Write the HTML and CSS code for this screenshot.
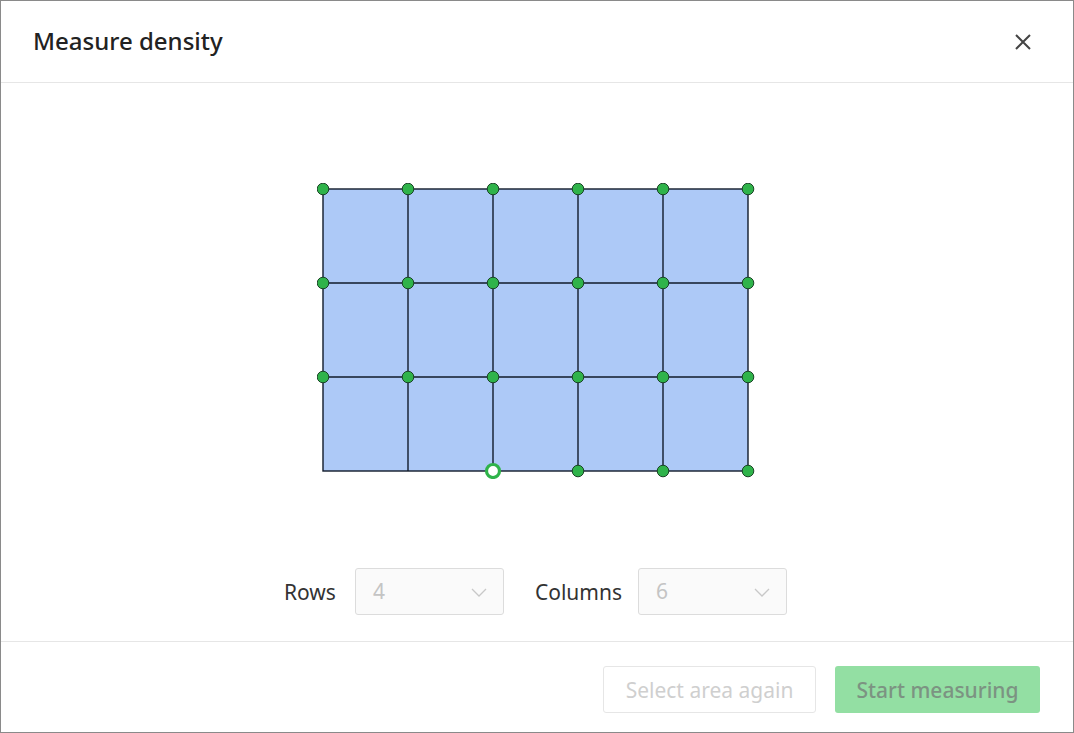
FILE: index.html
```html
<!DOCTYPE html>
<html>
<head>
    <title>Measure density</title>
    <link rel="stylesheet" href="styles.css">
</head>
<body>
    <div class="dialog">
        <div class="dialog-header">
            <h2>Measure density</h2>
            <button class="close-btn" aria-label="Close">
                <svg width="16" height="16" viewBox="0 0 16 16">
                    <path d="M1 1 L15 15 M15 1 L1 15" stroke="#444" stroke-width="2" fill="none"/>
                </svg>
            </button>
        </div>
        <div class="dialog-body">
            <svg class="grid" width="438" height="296" viewBox="0 0 438 296">
                <rect x="6" y="6" width="425" height="282" fill="#adc9f7"/>
                <g stroke="#101a2a" stroke-width="1.4" fill="none">
                    <rect x="6" y="6" width="425" height="282"/>
                    <line x1="91" y1="6" x2="91" y2="288"/>
                    <line x1="176" y1="6" x2="176" y2="288"/>
                    <line x1="261" y1="6" x2="261" y2="288"/>
                    <line x1="346" y1="6" x2="346" y2="288"/>
                    <line x1="6" y1="100" x2="431" y2="100"/>
                    <line x1="6" y1="194" x2="431" y2="194"/>
                </g>
                <g id="dots" fill="#2fb34a" stroke="#1a4426" stroke-width="1"></g>
                <circle cx="176" cy="288" r="6.5" fill="#fff" stroke="#2fb34a" stroke-width="3.2"/>
            </svg>
            <div class="controls">
                <label>Rows</label>
                <div class="select">
                    <span>4</span>
                    <svg width="16" height="10" viewBox="0 0 16 10"><path d="M1 1 L8 8 L15 1" stroke="#c8c8c8" stroke-width="1.3" fill="none"/></svg>
                </div>
                <label class="second">Columns</label>
                <div class="select">
                    <span>6</span>
                    <svg width="16" height="10" viewBox="0 0 16 10"><path d="M1 1 L8 8 L15 1" stroke="#c8c8c8" stroke-width="1.3" fill="none"/></svg>
                </div>
            </div>
        </div>
        <div class="dialog-footer">
            <button class="btn btn-outline" disabled>Select area again</button>
            <button class="btn btn-primary" disabled>Start measuring</button>
        </div>
    </div>

    <script>
        const dots = document.getElementById("dots");
        const xs = [6, 91, 176, 261, 346, 431];
        const ys = [6, 100, 194, 288];
        ys.forEach(function (y, r) {
            xs.forEach(function (x, c) {
                // bottom row: the first two corners are not placed yet, the third is the active one
                if (r === 3 && c < 3) return;
                const dot = document.createElementNS("http://www.w3.org/2000/svg", "circle");
                dot.setAttribute("cx", x);
                dot.setAttribute("cy", y);
                dot.setAttribute("r", 5.8);
                dots.appendChild(dot);
            });
        });
    </script>
</body>
</html>
```

FILE: styles.css
```css
body {
    margin: 0;
    font-family: "Noto Sans", "Open Sans", sans-serif;
}
.dialog {
    width: 1074px;
    height: 733px;
    box-sizing: border-box;
    border: 1px solid #8a8a8a;
    background: #fff;
    display: flex;
    flex-direction: column;
}
.dialog-header {
    height: 81px;
    border-bottom: 1px solid #e6e6e6;
    display: flex;
    align-items: center;
    justify-content: space-between;
    padding: 0 42px 0 32px;
}
.dialog-header h2 {
    margin: 0;
    font-size: 24px;
    font-weight: 500;
    color: #222;
    padding-bottom: 3px;
}
.close-btn {
    background: none;
    border: none;
    padding: 0;
    width: 16px;
    height: 16px;
    cursor: pointer;
    display: flex;
}
.dialog-body {
    flex: 1;
    border-bottom: 1px solid #e6e6e6;
    display: flex;
    flex-direction: column;
    align-items: center;
    padding-top: 100px;
    box-sizing: border-box;
}
.grid {
    display: block;
    margin-left: -2px;
}
.controls {
    margin-top: 89px;
    margin-left: -3px;
    display: flex;
    align-items: center;
}
.controls label {
    font-size: 21px;
    color: #333;
    margin-right: 19px;
}
.controls label.second {
    margin-left: 31px;
    margin-right: 16px;
}
.select {
    width: 149px;
    height: 47px;
    box-sizing: border-box;
    border: 1px solid #dcdcdc;
    border-radius: 3px;
    background: #fafafa;
    display: flex;
    align-items: center;
    justify-content: space-between;
    padding: 0 16px 0 17px;
    font-size: 21px;
    color: #c4c4c4;
}
.select span {
    margin-top: -2px;
}
.select svg {
    margin-top: 2px;
}
.dialog-footer {
    height: 90px;
    display: flex;
    align-items: flex-start;
    justify-content: flex-end;
    padding: 24px 33px 0 0;
    box-sizing: border-box;
    gap: 19px;
}
.btn {
    height: 47px;
    padding: 0;
    font-family: "Noto Sans", "Open Sans", sans-serif;
    font-size: 21px;
    border-radius: 3px;
    cursor: pointer;
}
.btn-outline {
    width: 213px;
    background: #fff;
    border: 1px solid #e6e6e6;
    color: #cfcfcf;
}
.btn-primary {
    width: 205px;
    background: #93dfa3;
    border: none;
    color: #7c9382;
    font-weight: 500;
}
```
